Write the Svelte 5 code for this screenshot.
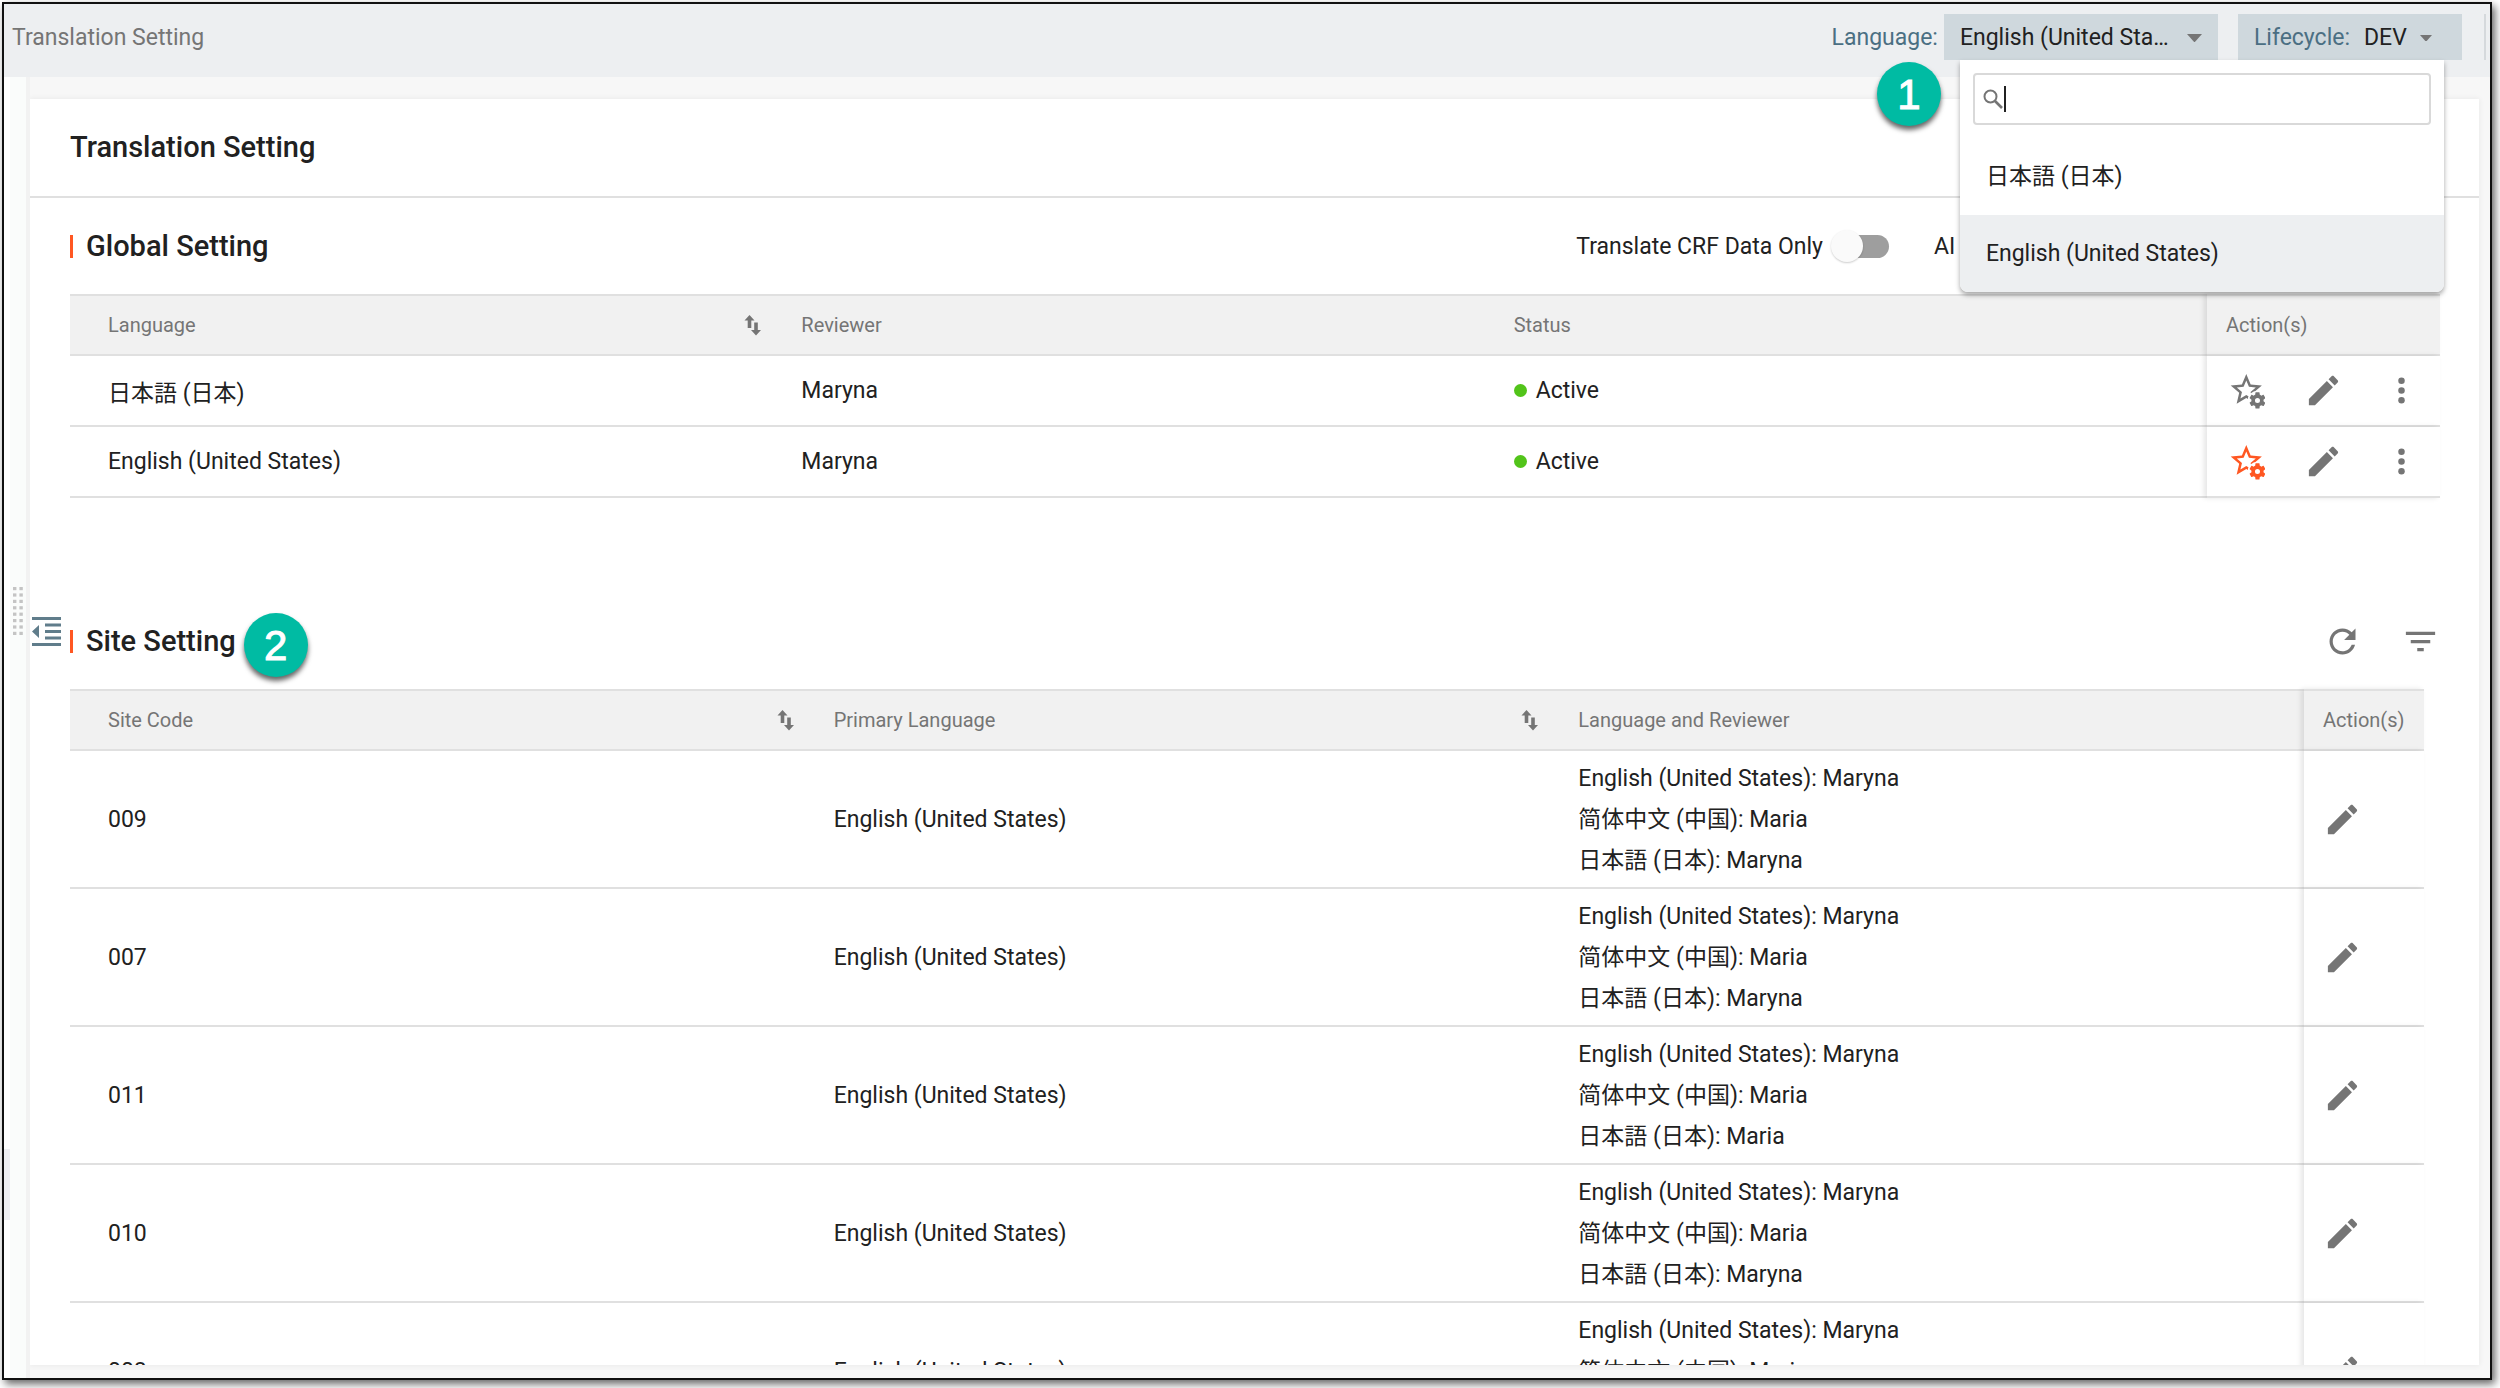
<script lang="ts">
  interface Language {
    name: string
    lang: string
  }

  interface SiteRow {
    code: string
    primary: string
    reviewers: { language: Language; reviewer: string }[]
  }

  const ja: Language = { name: '日本語 (日本)', lang: 'ja' }
  const en: Language = { name: 'English (United States)', lang: 'en' }
  const zh: Language = { name: '简体中文 (中国)', lang: 'zh' }

  const languages = [ja, en]

  const globalRows = [
    { language: ja, reviewer: 'Maryna', status: 'Active', isDefault: false },
    { language: en, reviewer: 'Maryna', status: 'Active', isDefault: true },
  ]

  function site(code: string, jaReviewer: string): SiteRow {
    return {
      code,
      primary: en.name,
      reviewers: [
        { language: en, reviewer: 'Maryna' },
        { language: zh, reviewer: 'Maria' },
        { language: ja, reviewer: jaReviewer },
      ],
    }
  }

  const siteRows = [
    site('009', 'Maryna'),
    site('007', 'Maryna'),
    site('011', 'Maria'),
    site('010', 'Maryna'),
    site('008', 'Maryna'),
  ]

  let selected = $state(en.name)
  let lifecycle = $state('DEV')
  let query = $state('')
  let translateCrfOnly = $state(false)

  const matches = $derived(
    languages.filter((l) => l.name.toLowerCase().includes(query.toLowerCase())),
  )
</script>

{#snippet sortIcon()}
  <svg class="sort-icon" viewBox="0 0 28 28" aria-hidden="true">
    <path d="M10.5 4l5 5.5h-3.2V17H8.7V9.500H5.500zM17 24.500L12 19h3.200v-7.500h3.600V19H22z" />
  </svg>
{/snippet}

{#snippet editButton()}
  <button class="icon-button" aria-label="Edit">
    <svg viewBox="0 0 24 24">
      <path
        d="M3 17.25V21h3.75L17.81 9.94l-3.75-3.75L3 17.25zM20.71 7.04c.39-.39.39-1.02 0-1.41l-2.34-2.34c-.39-.39-1.02-.39-1.41 0l-1.83 1.83 3.75 3.75 1.83-1.83z"
      />
    </svg>
  </button>
{/snippet}

<div class="page">
  <div class="window">
    <header class="topbar">
      <span class="crumb">Translation Setting</span>
      <label class="topbar-label" for="language">Language:</label>
      <div class="picker">
        <div class="select-box language-box">
          <select id="language" bind:value={selected}>
            {#each languages as l}
              <option value={l.name}>{l.name}</option>
            {/each}
          </select>
          <svg class="caret" viewBox="0 0 16 9" aria-hidden="true"><path d="M0 0h16L8 9z" /></svg>
        </div>

        <div class="menu">
          <div class="search">
            <svg viewBox="0 0 20 20" aria-hidden="true">
              <circle cx="7.5" cy="7.5" r="6" fill="none" stroke="currentColor" stroke-width="2" />
              <path d="M12 12l7 7" fill="none" stroke="currentColor" stroke-width="2.6" />
            </svg>
            <span class="cursor"></span>
            <input type="text" aria-label="Search language" bind:value={query} />
          </div>
          {#each matches as l}
            <button
              class="menu-item"
              class:active={selected === l.name}
              lang={l.lang}
              onclick={() => (selected = l.name)}
            >
              {l.name}
            </button>
          {/each}
        </div>

        <span class="badge badge-menu">1</span>
      </div>

      <div class="select-box lifecycle-box">
        <label class="topbar-label" for="lifecycle">Lifecycle:</label>
        <select id="lifecycle" bind:value={lifecycle}>
          <option>DEV</option>
          <option>UAT</option>
        </select>
        <svg class="caret small" viewBox="0 0 16 9" aria-hidden="true"><path d="M0 0h16L8 9z" /></svg>
      </div>
      <span class="topbar-divider"></span>
    </header>

    <div class="body">
      <aside class="rail">
        <div class="rail-edge"></div>
        <div class="rail-grip">
          <svg class="grip" viewBox="0 0 10 48" aria-hidden="true">
            {#each [0, 1, 2, 3, 4, 5, 6, 7] as i}
              <rect x="0" y={i * 6.4} width="3.4" height="3.2" />
              <rect x="6.4" y={i * 6.4} width="3.4" height="3.2" />
            {/each}
          </svg>
        </div>
        <button class="collapse" aria-label="Collapse menu">
          <svg viewBox="0 0 29 29">
            <path d="M0 0h29v3H0zM13 6.5h16v3H13zM13 13h16v3H13zM13 19.5h16v3H13zM0 26h29v3H0zM7 8v13L0 14.5z" />
          </svg>
        </button>
      </aside>

      <main class="card">
        <h1>Translation Setting</h1>

        <section>
          <div class="section-head">
            <h2>Global Setting</h2>
            <label class="toggle">
              Translate CRF Data Only
              <input type="checkbox" role="switch" bind:checked={translateCrfOnly} />
            </label>
            <span class="ai-label">AI</span>
          </div>

          <table>
            <thead>
              <tr>
                <th><div class="th">Language {@render sortIcon()}</div></th>
                <th>Reviewer</th>
                <th>Status</th>
                <th class="actions global-actions">Action(s)</th>
              </tr>
            </thead>
            <tbody>
              {#each globalRows as row}
                <tr class="short">
                  <td lang={row.language.lang}>{row.language.name}</td>
                  <td>{row.reviewer}</td>
                  <td><span class="status">{row.status}</span></td>
                  <td class="actions">
                    <div class="icons">
                      <button class="icon-button" class:default={row.isDefault} aria-label="Set as default">
                        <svg viewBox="-1 0 25 25">
                          <mask id="gear-gap-{row.language.lang}">
                            <rect width="24" height="24" fill="#fff" />
                            <circle cx="19.1" cy="18.8" r="6.2" fill="#000" />
                          </mask>
                          <path
                            mask="url(#gear-gap-{row.language.lang})"
                            d="M22 9.24l-7.19-.62L12 2 9.19 8.63 2 9.24l5.46 4.73L5.82 21 12 17.27 18.18 21l-1.63-7.03L22 9.24zM12 15.4l-3.76 2.27 1-4.28-3.32-2.88 4.38-.38L12 6.1l1.71 4.04 4.38.38-3.32 2.88 1 4.28L12 15.4z"
                          />
                          <path
                            transform="translate(12.7 12.4) scale(.54)"
                            d="M19.14 12.94c.04-.3.06-.61.06-.94 0-.32-.02-.64-.07-.94l2.03-1.58c.18-.14.23-.41.12-.61l-1.92-3.32c-.12-.22-.37-.29-.59-.22l-2.39.96c-.5-.38-1.03-.7-1.62-.94l-.36-2.54c-.04-.24-.24-.41-.48-.41h-3.84c-.24 0-.43.17-.47.41l-.36 2.54c-.59.24-1.13.57-1.62.94l-2.39-.96c-.22-.08-.47 0-.59.22L2.74 8.87c-.12.21-.08.47.12.61l2.03 1.58c-.05.3-.09.63-.09.94s.02.64.07.94l-2.03 1.58c-.18.14-.23.41-.12.61l1.92 3.32c.12.22.37.29.59.22l2.39-.96c.5.38 1.03.7 1.62.94l.36 2.54c.05.24.24.41.48.41h3.84c.24 0 .44-.17.47-.41l.36-2.54c.59-.24 1.13-.56 1.62-.94l2.39.96c.22.08.47 0 .59-.22l1.92-3.32c.12-.22.07-.47-.12-.61l-2.01-1.58zM12 15a3 3 0 1 1 0-6 3 3 0 0 1 0 6z"
                          />
                        </svg>
                      </button>
                      {@render editButton()}
                      <button class="icon-button" aria-label="More">
                        <svg viewBox="0 0 24 24">
                          <circle cx="12" cy="6" r="2" />
                          <circle cx="12" cy="12" r="2" />
                          <circle cx="12" cy="18" r="2" />
                        </svg>
                      </button>
                    </div>
                  </td>
                </tr>
              {/each}
            </tbody>
          </table>
        </section>

        <section class="site">
          <div class="section-head">
            <h2>Site Setting <span class="badge badge-site">2</span></h2>
            <div class="icons tools">
              <button class="icon-button" aria-label="Refresh">
                <svg viewBox="0 0 24 24">
                  <path
                    d="M17.65 6.35C16.2 4.9 14.21 4 12 4c-4.42 0-7.99 3.58-7.99 8s3.57 8 7.99 8c3.73 0 6.84-2.55 7.73-6h-2.08c-.82 2.33-3.04 4-5.65 4-3.31 0-6-2.69-6-6s2.69-6 6-6c1.66 0 3.14.69 4.22 1.78L13 11h7V4l-2.35 2.35z"
                  />
                </svg>
              </button>
              <button class="icon-button" aria-label="Filter">
                <svg viewBox="0 0 24 24">
                  <path d="M10 18h4v-2h-4v2zM3 6v2h18V6H3zm3 7h12v-2H6v2z" />
                </svg>
              </button>
            </div>
          </div>

          <table class="site-table">
            <thead>
              <tr>
                <th><div class="th">Site Code {@render sortIcon()}</div></th>
                <th><div class="th">Primary Language {@render sortIcon()}</div></th>
                <th>Language and Reviewer</th>
                <th class="actions site-actions">Action(s)</th>
              </tr>
            </thead>
            <tbody>
              {#each siteRows as row}
                <tr class="tall">
                  <td>{row.code}</td>
                  <td>{row.primary}</td>
                  <td>
                    {#each row.reviewers as r}
                      <div class="reviewer" lang={r.language.lang}>{r.language.name}: {r.reviewer}</div>
                    {/each}
                  </td>
                  <td class="actions"><div class="icons">{@render editButton()}</div></td>
                </tr>
              {/each}
            </tbody>
          </table>
        </section>
      </main>
    </div>
  </div>
</div>

<style>
  :global(body) {
    background: #fff;
  }

  .page {
    box-sizing: border-box;
    height: 100vh;
    padding: 2px 8px 8px 2px;
    overflow: hidden;
  }

  .window {
    --fg: #212121;
    --fg-muted: #757575;
    --accent: #ff5722;
    --line: #e0e0e0;
    --slate: #4b6f83;
    display: flex;
    flex-direction: column;
    box-sizing: border-box;
    height: 100%;
    border: 2px solid #111;
    box-shadow: 3px 4px 8px rgba(0, 0, 0, 0.6);
    background: #f7f7f7;
    color: var(--fg);
    font-family: Roboto, 'Noto Sans CJK JP', sans-serif;
    font-size: 23px;
  }

  :lang(zh) {
    font-family: Roboto, 'Noto Sans CJK SC', sans-serif;
  }

  button,
  input,
  select {
    border: 0;
    padding: 0;
    margin: 0;
    background: none;
    color: inherit;
    font: inherit;
  }

  select {
    appearance: none;
    outline: 0;
    text-overflow: ellipsis;
  }

  svg {
    display: block;
    fill: currentColor;
  }

  .topbar {
    display: flex;
    align-items: flex-start;
    flex: none;
    height: 63px;
    padding: 10px 4px 0 8px;
    background: #edeff1;
    line-height: 48px;
  }

  .crumb {
    margin-right: auto;
    color: var(--fg-muted);
  }

  .topbar-label {
    color: var(--slate);
  }

  .picker {
    position: relative;
    margin: 0 20px 0 6px;
  }

  .select-box {
    display: flex;
    align-items: center;
    height: 46px;
    padding: 2px 16px 0;
    background: #cfd8dd;
    box-sizing: border-box;
  }

  .language-box select {
    width: 215px;
  }

  .caret {
    width: 15px;
    margin-left: 12px;
    color: #757575;
  }

  .caret.small {
    width: 12px;
    margin-left: 10px;
  }

  .lifecycle-box {
    padding-right: 30px;
  }

  .lifecycle-box select {
    width: 46px;
    margin-left: 14px;
  }

  .topbar-divider {
    width: 2px;
    height: 46px;
    margin-left: 22px;
    background: #d5d9dc;
  }

  .menu {
    position: absolute;
    top: 46px;
    left: 16px;
    z-index: 5;
    width: 484px;
    background: #fff;
    border-radius: 0 0 8px 8px;
    box-shadow: 0 3px 5px rgba(0, 0, 0, 0.35);
    line-height: 40px;
    overflow: hidden;
  }

  .search {
    display: flex;
    align-items: center;
    height: 48px;
    margin: 13px;
    padding-left: 8px;
    border: 2px solid #d9d9d9;
    border-radius: 4px;
  }

  .search svg {
    width: 20px;
    color: #757575;
  }

  .cursor {
    width: 2px;
    height: 26px;
    margin-left: 1px;
    background: #212121;
  }

  .search input {
    flex: 1;
    height: 44px;
    outline: 0;
  }

  .menu-item {
    display: block;
    width: 100%;
    height: 77px;
    padding: 0 26px;
    text-align: left;
  }

  .menu-item.active {
    background: #edeff1;
  }

  .badge {
    position: absolute;
    z-index: 6;
    width: 64px;
    height: 64px;
    border-radius: 50%;
    background: #00bba3;
    box-shadow: 0 4px 5px rgba(0, 0, 0, 0.6);
    color: #fff;
    font: 42px/66px 'Liberation Sans', sans-serif;
    text-align: center;
    -webkit-text-stroke: 1px #fff;
  }

  .badge-menu {
    top: 48px;
    right: 277px;
  }

  .badge-site {
    top: -8px;
    left: 100%;
    margin-left: 8px;
  }

  .body {
    display: flex;
    flex: 1;
    min-height: 0;
    padding: 22px 11px 13px 0;
  }

  .rail {
    display: flex;
    position: relative;
    flex: none;
    width: 26px;
    margin: -22px 0 -13px;
    background: linear-gradient(to right, #fff 6px, #fafcfb 6px 22px, #f2f2f2 22px);
  }

  .rail-edge {
    align-self: flex-end;
    width: 6px;
    height: 71px;
    margin-bottom: 158px;
    background: #eeeff2;
  }

  .rail-grip {
    display: flex;
    align-items: center;
    width: 16px;
    padding-bottom: 234px;
    color: #c4c4c4;
  }

  .grip {
    width: 10px;
    margin: 0 auto 0 3px;
  }

  .collapse {
    position: absolute;
    top: 549px;
    left: 28px;
    width: 29px;
    height: 29px;
    color: #607d8b;
  }

  .collapse {
    top: 540px;
  }

  .card {
    flex: 1;
    min-width: 0;
    overflow: hidden;
    background: #fff;
    box-shadow: 0 0 6px rgba(0, 0, 0, 0.07);
  }

  h1,
  h2 {
    margin: 0;
    font-size: 29px;
    font-weight: 500;
  }

  h1 {
    padding: 0 40px;
    border-bottom: 2px solid var(--line);
    line-height: 97px;
  }

  section {
    padding: 0 39px 0 40px;
  }

  .site {
    padding-top: 95px;
  }

  .section-head {
    display: flex;
    align-items: center;
    height: 96px;
  }

  h2 {
    position: relative;
    display: flex;
    align-items: center;
    gap: 13px;
    line-height: 40px;
  }

  h2::before {
    content: '';
    width: 3px;
    height: 23px;
    background: var(--accent);
  }

  .toggle {
    display: flex;
    align-items: center;
    gap: 14px;
    margin-left: auto;
  }

  .toggle input {
    position: relative;
    appearance: none;
    width: 52px;
    height: 23px;
    border-radius: 12px;
    background: #9e9e9e;
  }

  .toggle input::before {
    content: '';
    position: absolute;
    top: -5px;
    left: -6px;
    width: 32px;
    height: 32px;
    border-radius: 50%;
    background: #fafafa;
    box-shadow: 0 1px 2px rgba(0, 0, 0, 0.2);
  }

  .toggle input:checked::before {
    left: 26px;
  }

  .ai-label {
    width: 506px;
    margin-left: 45px;
  }

  table {
    width: 100%;
    border-collapse: separate;
    border-spacing: 0;
    table-layout: fixed;
  }

  .site-table {
    width: calc(100% - 16px);
  }

  th {
    height: 58px;
    padding: 0 15px 0 19px;
    border: solid var(--line);
    border-width: 2px 0;
    background: #f1f1f1;
    color: var(--fg-muted);
    font-size: 20px;
    font-weight: 400;
    text-align: left;
  }

  .th {
    display: flex;
    align-items: center;
    justify-content: space-between;
  }

  .sort-icon {
    width: 28px;
  }

  td {
    padding: 0 15px 0 19px;
    border-bottom: 2px solid var(--line);
    background: #fff;
  }

  th:first-child,
  td:first-child {
    padding-left: 38px;
  }

  .short td {
    height: 69px;
  }

  .tall td {
    height: 136px;
  }

  .actions {
    position: relative;
    padding-right: 0;
    box-shadow: -3px 0 5px rgba(0, 0, 0, 0.1);
  }

  .global-actions {
    width: 214px;
  }

  .site-actions {
    width: 101px;
  }

  .status {
    display: flex;
    align-items: center;
    gap: 9px;
  }

  .status::before {
    content: '';
    width: 13px;
    height: 13px;
    border-radius: 50%;
    background: #52c41a;
  }

  .reviewer {
    line-height: 41px;
  }

  .icons {
    display: flex;
    gap: 39px;
  }

  .tools {
    margin-left: auto;
  }

  .icon-button {
    width: 39px;
    height: 39px;
    color: #757575;
    cursor: pointer;
  }

  .icon-button svg {
    width: 39px;
    height: 39px;
  }

  .icon-button.default {
    color: var(--accent);
  }
</style>
